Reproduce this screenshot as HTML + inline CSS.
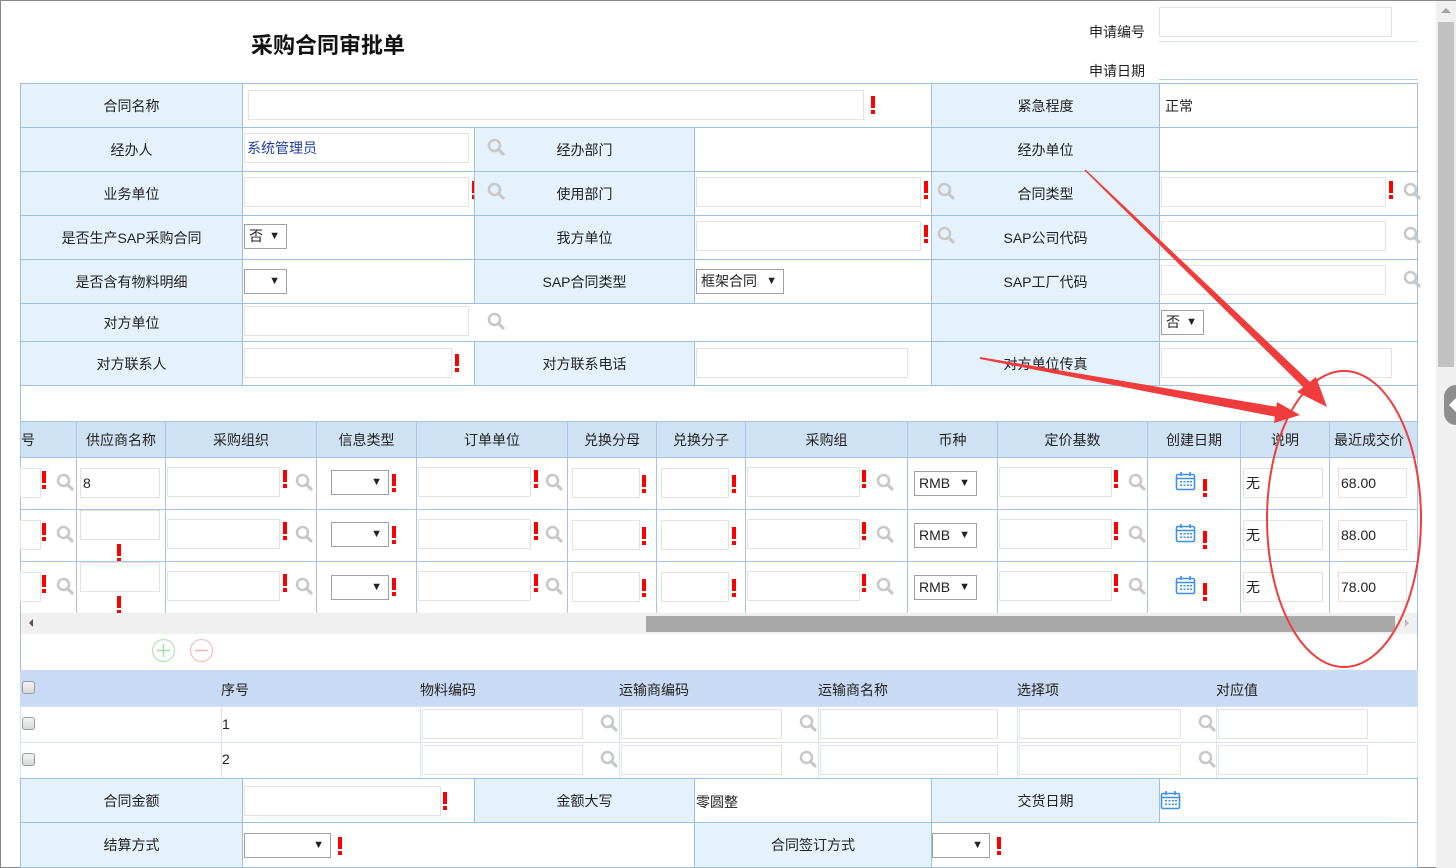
<!DOCTYPE html>
<html><head><meta charset="utf-8"><style>
*{box-sizing:border-box;margin:0;padding:0}
body{width:1456px;height:868px;overflow:hidden;background:#fff;font-family:"Liberation Sans","Noto Sans CJK SC",sans-serif;font-size:14px;color:#222;position:relative}
.a{position:absolute}
.l{position:absolute;background:#e5f1fb;border:1px solid #9cc0e0;display:flex;align-items:center;justify-content:center}
.w{position:absolute;background:#fff;border:1px solid #9cc0e0}
.in{position:absolute;background:#fff;border:1px solid #e4e4de;height:30px;padding-left:2px;line-height:28px}
.ex{position:absolute;width:4px;height:18px}
.ex:before{content:"";position:absolute;left:0;top:0;width:4px;height:12px;background:#f00}
.ex:after{content:"";position:absolute;left:0;top:14px;width:4px;height:4px;background:#f00}
.sel{position:absolute;background:#fff;border:1px solid #a0a0a0;height:25px;line-height:23px;padding-left:4px;font-size:14px}
.sel:after{content:"▼";position:absolute;right:6px;font-size:11px}
.g{position:absolute;border:1px solid #a6c3ea;background:#fff}
.gh{position:absolute;border:1px solid #a6c3ea;background:#cfe2f3;display:flex;align-items:center;justify-content:center}
.cb{position:absolute;width:13px;height:13px;border:1px solid #999;border-radius:3px;background:linear-gradient(#f4f4f4,#d8d8d8)}
.t2{position:absolute;border:1px solid #d4e4f2;background:#fff}
</style></head><body>
<svg width="0" height="0" style="position:absolute"><defs>
<g id="mg"><circle cx="7.5" cy="7.5" r="5.5" fill="none" stroke="#c8c8c8" stroke-width="2.6"/><line x1="11.5" y1="11.5" x2="16" y2="16" stroke="#c8c8c8" stroke-width="3.2" stroke-linecap="round"/></g>
<g id="cal"><rect x="1.5" y="3.5" width="18" height="15" rx="1.5" fill="#fff" stroke="#3d8fe8" stroke-width="1.6"/><line x1="1.5" y1="7.5" x2="19.5" y2="7.5" stroke="#3d8fe8" stroke-width="1.5"/><line x1="6" y1="1" x2="6" y2="5" stroke="#3d8fe8" stroke-width="1.6"/><line x1="15" y1="1" x2="15" y2="5" stroke="#3d8fe8" stroke-width="1.6"/><g fill="#3d8fe8"><rect x="5" y="10" width="2" height="1.5"/><rect x="8.5" y="10" width="2" height="1.5"/><rect x="12" y="10" width="2" height="1.5"/><rect x="15" y="10" width="2" height="1.5"/><rect x="5" y="13.5" width="2" height="1.5"/><rect x="8.5" y="13.5" width="2" height="1.5"/><rect x="12" y="13.5" width="2" height="1.5"/><rect x="15" y="13.5" width="2" height="1.5"/></g></g>
</defs></svg>
<!-- frame -->
<div class="a" style="left:0;top:0;width:1456px;height:1px;background:#888"></div>
<div class="a" style="left:0;top:0;width:1px;height:868px;background:#888"></div>
<div class="a" style="left:0;top:867px;width:1436px;height:1px;background:#888"></div>
<!-- vertical scrollbar -->
<div class="a" style="left:1436px;top:1px;width:20px;height:867px;background:#f0f0f0"></div>
<div class="a" style="left:1438px;top:22px;width:16px;height:345px;background:#c1c1c1"></div>
<div class="a" style="left:1441px;top:8px;width:0;height:0;border-left:5px solid transparent;border-right:5px solid transparent;border-bottom:5px solid #a3a3a3"></div>
<div class="a" style="left:1444px;top:385px;width:24px;height:40px;border-radius:20px;background:#8e8e8e"></div>
<div class="a" style="left:1449px;top:398px;width:0;height:0;border-top:7px solid transparent;border-bottom:7px solid transparent;border-right:7px solid #fff"></div>

<!-- header -->
<div class="a" style="left:251px;top:28px;font-size:22px;font-weight:bold;color:#111">采购合同审批单</div>
<div class="a" style="left:1089px;top:22px">申请编号</div>
<div class="in" style="left:1159px;top:7px;width:233px;height:30px"></div>
<div class="a" style="left:1159px;top:41px;width:259px;height:1px;background:#d0dfee"></div>
<div class="a" style="left:1089px;top:61px">申请日期</div>
<div class="a" style="left:1159px;top:79px;width:259px;height:1px;background:#b8cfe6"></div>

<!-- main table -->
<div class="l" style="left:20px;top:83px;width:223px;height:45px">合同名称</div>
<div class="w" style="left:242px;top:83px;width:690px;height:45px"></div>
<div class="in" style="left:248px;top:90px;width:616px;height:30px"></div>
<div class="ex" style="left:871px;top:96px"></div>
<div class="l" style="left:931px;top:83px;width:229px;height:45px">紧急程度</div>
<div class="w" style="left:1159px;top:83px;width:259px;height:45px"></div>
<div class="a" style="left:1165px;top:96px">正常</div>

<div class="l" style="left:20px;top:127px;width:223px;height:45px">经办人</div>
<div class="w" style="left:242px;top:127px;width:233px;height:45px"></div>
<div class="in" style="left:244px;top:133px;width:225px;height:30px;color:#1f3fa0">系统管理员</div>
<div class="l" style="left:474px;top:127px;width:221px;height:45px">经办部门</div>
<svg class="a" style="left:487px;top:138px" width="18" height="18"><use href="#mg"/></svg>
<div class="w" style="left:694px;top:127px;width:238px;height:45px"></div>
<div class="l" style="left:931px;top:127px;width:229px;height:45px">经办单位</div>
<div class="w" style="left:1159px;top:127px;width:259px;height:45px"></div>

<div class="l" style="left:20px;top:171px;width:223px;height:45px">业务单位</div>
<div class="w" style="left:242px;top:171px;width:233px;height:45px"></div>
<div class="in" style="left:244px;top:177px;width:225px;height:30px"></div>
<div class="ex" style="left:472px;top:181px"></div>
<div class="l" style="left:474px;top:171px;width:221px;height:45px">使用部门</div>
<svg class="a" style="left:487px;top:182px" width="18" height="18"><use href="#mg"/></svg>
<div class="w" style="left:694px;top:171px;width:238px;height:45px"></div>
<div class="in" style="left:696px;top:177px;width:225px;height:30px"></div>
<div class="ex" style="left:924px;top:181px"></div>
<div class="l" style="left:931px;top:171px;width:229px;height:45px">合同类型</div>
<svg class="a" style="left:937px;top:182px" width="18" height="18"><use href="#mg"/></svg>
<div class="w" style="left:1159px;top:171px;width:259px;height:45px"></div>
<div class="in" style="left:1161px;top:177px;width:225px;height:30px"></div>
<div class="ex" style="left:1389px;top:181px"></div>
<svg class="a" style="left:1403px;top:182px" width="18" height="18"><use href="#mg"/></svg>

<div class="l" style="left:20px;top:215px;width:223px;height:45px">是否生产SAP采购合同</div>
<div class="w" style="left:242px;top:215px;width:233px;height:45px"></div>
<div class="sel" style="left:244px;top:224px;width:43px">否</div>
<div class="l" style="left:474px;top:215px;width:221px;height:45px">我方单位</div>
<div class="w" style="left:694px;top:215px;width:238px;height:45px"></div>
<div class="in" style="left:696px;top:221px;width:225px;height:30px"></div>
<div class="ex" style="left:924px;top:225px"></div>
<div class="l" style="left:931px;top:215px;width:229px;height:45px">SAP公司代码</div>
<svg class="a" style="left:937px;top:226px" width="18" height="18"><use href="#mg"/></svg>
<div class="w" style="left:1159px;top:215px;width:259px;height:45px"></div>
<div class="in" style="left:1161px;top:221px;width:225px;height:30px"></div>
<svg class="a" style="left:1403px;top:226px" width="18" height="18"><use href="#mg"/></svg>

<div class="l" style="left:20px;top:259px;width:223px;height:45px">是否含有物料明细</div>
<div class="w" style="left:242px;top:259px;width:233px;height:45px"></div>
<div class="sel" style="left:244px;top:269px;width:43px"></div>
<div class="l" style="left:474px;top:259px;width:221px;height:45px">SAP合同类型</div>
<div class="w" style="left:694px;top:259px;width:238px;height:45px"></div>
<div class="sel" style="left:696px;top:269px;width:88px">框架合同</div>
<div class="l" style="left:931px;top:259px;width:229px;height:45px">SAP工厂代码</div>
<div class="w" style="left:1159px;top:259px;width:259px;height:45px"></div>
<div class="in" style="left:1161px;top:265px;width:225px;height:30px"></div>
<svg class="a" style="left:1403px;top:270px" width="18" height="18"><use href="#mg"/></svg>

<div class="l" style="left:20px;top:303px;width:223px;height:39px">对方单位</div>
<div class="w" style="left:242px;top:303px;width:690px;height:39px"></div>
<div class="in" style="left:244px;top:306px;width:225px;height:30px"></div>
<svg class="a" style="left:487px;top:312px" width="18" height="18"><use href="#mg"/></svg>
<div class="l" style="left:931px;top:303px;width:229px;height:39px"></div>
<div class="w" style="left:1159px;top:303px;width:259px;height:39px"></div>
<div class="sel" style="left:1161px;top:310px;width:43px">否</div>

<div class="l" style="left:20px;top:341px;width:223px;height:45px">对方联系人</div>
<div class="w" style="left:242px;top:341px;width:233px;height:45px"></div>
<div class="in" style="left:244px;top:348px;width:208px;height:30px"></div>
<div class="ex" style="left:455px;top:354px"></div>
<div class="l" style="left:474px;top:341px;width:221px;height:45px">对方联系电话</div>
<div class="w" style="left:694px;top:341px;width:238px;height:45px"></div>
<div class="in" style="left:696px;top:348px;width:212px;height:30px"></div>
<div class="l" style="left:931px;top:341px;width:229px;height:45px">对方单位传真</div>
<div class="w" style="left:1159px;top:341px;width:259px;height:45px"></div>
<div class="in" style="left:1161px;top:348px;width:231px;height:30px"></div>

<div class="w" style="left:20px;top:385px;width:1398px;height:37px"></div>

<!-- grid header -->
<div class="gh" style="left:20px;top:421px;width:57px;height:37px;justify-content:flex-start">号</div>
<div class="gh" style="left:76px;top:421px;width:90px;height:37px">供应商名称</div>
<div class="gh" style="left:165px;top:421px;width:152px;height:37px">采购组织</div>
<div class="gh" style="left:316px;top:421px;width:101px;height:37px">信息类型</div>
<div class="gh" style="left:416px;top:421px;width:152px;height:37px">订单单位</div>
<div class="gh" style="left:567px;top:421px;width:90px;height:37px">兑换分母</div>
<div class="gh" style="left:656px;top:421px;width:90px;height:37px">兑换分子</div>
<div class="gh" style="left:745px;top:421px;width:163px;height:37px">采购组</div>
<div class="gh" style="left:907px;top:421px;width:91px;height:37px">币种</div>
<div class="gh" style="left:997px;top:421px;width:151px;height:37px">定价基数</div>
<div class="gh" style="left:1147px;top:421px;width:94px;height:37px">创建日期</div>
<div class="gh" style="left:1240px;top:421px;width:90px;height:37px">说明</div>
<div class="gh" style="left:1329px;top:421px;width:89px;height:37px;overflow:hidden;white-space:nowrap;justify-content:flex-start;padding-left:4px">最近成交价</div>

<!-- grid row 1 (457) -->
<div class="g" style="left:20px;top:457px;width:57px;height:53px"></div>
<div class="g" style="left:76px;top:457px;width:90px;height:53px"></div>
<div class="g" style="left:165px;top:457px;width:152px;height:53px"></div>
<div class="g" style="left:316px;top:457px;width:101px;height:53px"></div>
<div class="g" style="left:416px;top:457px;width:152px;height:53px"></div>
<div class="g" style="left:567px;top:457px;width:90px;height:53px"></div>
<div class="g" style="left:656px;top:457px;width:90px;height:53px"></div>
<div class="g" style="left:745px;top:457px;width:163px;height:53px"></div>
<div class="g" style="left:907px;top:457px;width:91px;height:53px"></div>
<div class="g" style="left:997px;top:457px;width:151px;height:53px"></div>
<div class="g" style="left:1147px;top:457px;width:94px;height:53px"></div>
<div class="g" style="left:1240px;top:457px;width:90px;height:53px"></div>
<div class="g" style="left:1329px;top:457px;width:89px;height:53px"></div>
<div class="in" style="left:20px;top:468px;width:21px"></div><div class="ex" style="left:42px;top:471px"></div><svg class="a" style="left:56px;top:473px" width="18" height="18"><use href="#mg"/></svg>
<div class="in" style="left:80px;top:468px;width:80px">8</div>
<div class="in" style="left:167px;top:467px;width:113px"></div><div class="ex" style="left:283px;top:470px"></div><svg class="a" style="left:295px;top:473px" width="18" height="18"><use href="#mg"/></svg>
<div class="sel" style="left:331px;top:470px;width:58px"></div><div class="ex" style="left:392px;top:474px"></div>
<div class="in" style="left:418px;top:467px;width:113px"></div><div class="ex" style="left:534px;top:470px"></div><svg class="a" style="left:545px;top:473px" width="18" height="18"><use href="#mg"/></svg>
<div class="in" style="left:572px;top:468px;width:68px"></div><div class="ex" style="left:642px;top:475px"></div>
<div class="in" style="left:661px;top:468px;width:68px"></div><div class="ex" style="left:732px;top:475px"></div>
<div class="in" style="left:747px;top:467px;width:113px"></div><div class="ex" style="left:862px;top:470px"></div><svg class="a" style="left:876px;top:473px" width="18" height="18"><use href="#mg"/></svg>
<div class="sel" style="left:914px;top:471px;width:63px">RMB</div>
<div class="in" style="left:999px;top:467px;width:113px"></div><div class="ex" style="left:1114px;top:470px"></div><svg class="a" style="left:1128px;top:473px" width="18" height="18"><use href="#mg"/></svg>
<svg class="a" style="left:1175px;top:471px" width="22" height="20"><use href="#cal"/></svg><div class="ex" style="left:1203px;top:479px"></div>
<div class="in" style="left:1243px;top:468px;width:80px">无</div>
<div class="in" style="left:1338px;top:468px;width:69px">68.00</div>

<!-- grid row 2 (509) -->
<div class="g" style="left:20px;top:509px;width:57px;height:53px"></div>
<div class="g" style="left:76px;top:509px;width:90px;height:53px"></div>
<div class="g" style="left:165px;top:509px;width:152px;height:53px"></div>
<div class="g" style="left:316px;top:509px;width:101px;height:53px"></div>
<div class="g" style="left:416px;top:509px;width:152px;height:53px"></div>
<div class="g" style="left:567px;top:509px;width:90px;height:53px"></div>
<div class="g" style="left:656px;top:509px;width:90px;height:53px"></div>
<div class="g" style="left:745px;top:509px;width:163px;height:53px"></div>
<div class="g" style="left:907px;top:509px;width:91px;height:53px"></div>
<div class="g" style="left:997px;top:509px;width:151px;height:53px"></div>
<div class="g" style="left:1147px;top:509px;width:94px;height:53px"></div>
<div class="g" style="left:1240px;top:509px;width:90px;height:53px"></div>
<div class="g" style="left:1329px;top:509px;width:89px;height:53px"></div>
<div class="in" style="left:20px;top:520px;width:21px"></div><div class="ex" style="left:42px;top:523px"></div><svg class="a" style="left:56px;top:525px" width="18" height="18"><use href="#mg"/></svg>
<div class="in" style="left:80px;top:510px;width:80px"></div><div class="ex" style="left:117px;top:544px"></div>
<div class="in" style="left:167px;top:519px;width:113px"></div><div class="ex" style="left:283px;top:522px"></div><svg class="a" style="left:295px;top:525px" width="18" height="18"><use href="#mg"/></svg>
<div class="sel" style="left:331px;top:522px;width:58px"></div><div class="ex" style="left:392px;top:526px"></div>
<div class="in" style="left:418px;top:519px;width:113px"></div><div class="ex" style="left:534px;top:522px"></div><svg class="a" style="left:545px;top:525px" width="18" height="18"><use href="#mg"/></svg>
<div class="in" style="left:572px;top:520px;width:68px"></div><div class="ex" style="left:642px;top:527px"></div>
<div class="in" style="left:661px;top:520px;width:68px"></div><div class="ex" style="left:732px;top:527px"></div>
<div class="in" style="left:747px;top:519px;width:113px"></div><div class="ex" style="left:862px;top:522px"></div><svg class="a" style="left:876px;top:525px" width="18" height="18"><use href="#mg"/></svg>
<div class="sel" style="left:914px;top:523px;width:63px">RMB</div>
<div class="in" style="left:999px;top:519px;width:113px"></div><div class="ex" style="left:1114px;top:522px"></div><svg class="a" style="left:1128px;top:525px" width="18" height="18"><use href="#mg"/></svg>
<svg class="a" style="left:1175px;top:523px" width="22" height="20"><use href="#cal"/></svg><div class="ex" style="left:1203px;top:531px"></div>
<div class="in" style="left:1243px;top:520px;width:80px">无</div>
<div class="in" style="left:1338px;top:520px;width:69px">88.00</div>

<!-- grid row 3 (561) -->
<div class="g" style="left:20px;top:561px;width:57px;height:53px"></div>
<div class="g" style="left:76px;top:561px;width:90px;height:53px"></div>
<div class="g" style="left:165px;top:561px;width:152px;height:53px"></div>
<div class="g" style="left:316px;top:561px;width:101px;height:53px"></div>
<div class="g" style="left:416px;top:561px;width:152px;height:53px"></div>
<div class="g" style="left:567px;top:561px;width:90px;height:53px"></div>
<div class="g" style="left:656px;top:561px;width:90px;height:53px"></div>
<div class="g" style="left:745px;top:561px;width:163px;height:53px"></div>
<div class="g" style="left:907px;top:561px;width:91px;height:53px"></div>
<div class="g" style="left:997px;top:561px;width:151px;height:53px"></div>
<div class="g" style="left:1147px;top:561px;width:94px;height:53px"></div>
<div class="g" style="left:1240px;top:561px;width:90px;height:53px"></div>
<div class="g" style="left:1329px;top:561px;width:89px;height:53px"></div>
<div class="in" style="left:20px;top:572px;width:21px"></div><div class="ex" style="left:42px;top:575px"></div><svg class="a" style="left:56px;top:577px" width="18" height="18"><use href="#mg"/></svg>
<div class="in" style="left:80px;top:562px;width:80px"></div><div class="ex" style="left:117px;top:596px"></div>
<div class="in" style="left:167px;top:571px;width:113px"></div><div class="ex" style="left:283px;top:574px"></div><svg class="a" style="left:295px;top:577px" width="18" height="18"><use href="#mg"/></svg>
<div class="sel" style="left:331px;top:575px;width:58px"></div><div class="ex" style="left:392px;top:578px"></div>
<div class="in" style="left:418px;top:571px;width:113px"></div><div class="ex" style="left:534px;top:574px"></div><svg class="a" style="left:545px;top:577px" width="18" height="18"><use href="#mg"/></svg>
<div class="in" style="left:572px;top:572px;width:68px"></div><div class="ex" style="left:642px;top:579px"></div>
<div class="in" style="left:661px;top:572px;width:68px"></div><div class="ex" style="left:732px;top:579px"></div>
<div class="in" style="left:747px;top:571px;width:113px"></div><div class="ex" style="left:862px;top:574px"></div><svg class="a" style="left:876px;top:577px" width="18" height="18"><use href="#mg"/></svg>
<div class="sel" style="left:914px;top:575px;width:63px">RMB</div>
<div class="in" style="left:999px;top:571px;width:113px"></div><div class="ex" style="left:1114px;top:574px"></div><svg class="a" style="left:1128px;top:577px" width="18" height="18"><use href="#mg"/></svg>
<svg class="a" style="left:1175px;top:575px" width="22" height="20"><use href="#cal"/></svg><div class="ex" style="left:1203px;top:583px"></div>
<div class="in" style="left:1243px;top:572px;width:80px">无</div>
<div class="in" style="left:1338px;top:572px;width:69px">78.00</div>

<!-- h scrollbar -->
<div class="a" style="left:20px;top:613px;width:1398px;height:21px;background:#f0f0f0"></div>
<div class="a" style="left:29px;top:619px;width:0;height:0;border-top:4px solid transparent;border-bottom:4px solid transparent;border-right:4px solid #555"></div>
<div class="a" style="left:646px;top:616px;width:749px;height:16px;background:#a8a8a8"></div>
<div class="a" style="left:1405px;top:619px;width:0;height:0;border-top:4px solid transparent;border-bottom:4px solid transparent;border-left:4px solid #bbb"></div>
<div class="a" style="left:20px;top:613px;width:1px;height:255px;background:#9cc0e0"></div>
<div class="a" style="left:1417px;top:613px;width:1px;height:255px;background:#9cc0e0"></div>

<!-- add/remove -->
<svg class="a" style="left:151px;top:638px" width="64" height="26"><circle cx="12.5" cy="12.5" r="11" fill="none" stroke="#b8e4b8" stroke-width="1.3"/><path d="M12.5 6v13M6 12.5h13" stroke="#a8dca8" stroke-width="1.5"/><circle cx="50.5" cy="12.5" r="11" fill="none" stroke="#f5c2c2" stroke-width="1.3"/><path d="M44 12.5h13" stroke="#f2b0b0" stroke-width="1.5"/></svg>

<!-- second grid -->
<div class="a" style="left:20px;top:670px;width:1398px;height:36px;background:#c9daf5"></div>
<div class="cb" style="left:22px;top:681px"></div>
<div class="a" style="left:221px;top:680px">序号</div>
<div class="a" style="left:420px;top:680px">物料编码</div>
<div class="a" style="left:619px;top:680px">运输商编码</div>
<div class="a" style="left:818px;top:680px">运输商名称</div>
<div class="a" style="left:1017px;top:680px">选择项</div>
<div class="a" style="left:1216px;top:680px">对应值</div>

<div class="t2" style="left:20px;top:706px;width:202px;height:37px"></div>
<div class="t2" style="left:221px;top:706px;width:200px;height:37px"></div>
<div class="t2" style="left:420px;top:706px;width:200px;height:37px"></div>
<div class="t2" style="left:619px;top:706px;width:200px;height:37px"></div>
<div class="t2" style="left:818px;top:706px;width:200px;height:37px"></div>
<div class="t2" style="left:1017px;top:706px;width:200px;height:37px"></div>
<div class="t2" style="left:1216px;top:706px;width:202px;height:37px"></div>
<div class="cb" style="left:22px;top:717px"></div>
<div class="a" style="left:222px;top:716px">1</div>
<div class="in" style="left:422px;top:709px;width:161px"></div><svg class="a" style="left:600px;top:714px" width="18" height="18"><use href="#mg"/></svg>
<div class="in" style="left:621px;top:709px;width:161px"></div><svg class="a" style="left:799px;top:714px" width="18" height="18"><use href="#mg"/></svg>
<div class="in" style="left:820px;top:709px;width:178px"></div>
<div class="in" style="left:1019px;top:709px;width:162px"></div><svg class="a" style="left:1198px;top:714px" width="18" height="18"><use href="#mg"/></svg>
<div class="in" style="left:1218px;top:709px;width:150px"></div>

<div class="t2" style="left:20px;top:742px;width:202px;height:37px"></div>
<div class="t2" style="left:221px;top:742px;width:200px;height:37px"></div>
<div class="t2" style="left:420px;top:742px;width:200px;height:37px"></div>
<div class="t2" style="left:619px;top:742px;width:200px;height:37px"></div>
<div class="t2" style="left:818px;top:742px;width:200px;height:37px"></div>
<div class="t2" style="left:1017px;top:742px;width:200px;height:37px"></div>
<div class="t2" style="left:1216px;top:742px;width:202px;height:37px"></div>
<div class="cb" style="left:22px;top:753px"></div>
<div class="a" style="left:222px;top:751px">2</div>
<div class="in" style="left:422px;top:745px;width:161px"></div><svg class="a" style="left:600px;top:750px" width="18" height="18"><use href="#mg"/></svg>
<div class="in" style="left:621px;top:745px;width:161px"></div><svg class="a" style="left:799px;top:750px" width="18" height="18"><use href="#mg"/></svg>
<div class="in" style="left:820px;top:745px;width:178px"></div>
<div class="in" style="left:1019px;top:745px;width:162px"></div><svg class="a" style="left:1198px;top:750px" width="18" height="18"><use href="#mg"/></svg>
<div class="in" style="left:1218px;top:745px;width:150px"></div>

<!-- bottom table -->
<div class="l" style="left:20px;top:778px;width:223px;height:45px">合同金额</div>
<div class="w" style="left:242px;top:778px;width:233px;height:45px"></div>
<div class="in" style="left:244px;top:786px;width:197px;height:30px"></div>
<div class="ex" style="left:443px;top:792px"></div>
<div class="l" style="left:474px;top:778px;width:221px;height:45px">金额大写</div>
<div class="w" style="left:694px;top:778px;width:238px;height:45px"></div>
<div class="a" style="left:696px;top:792px">零圆整</div>
<div class="l" style="left:931px;top:778px;width:229px;height:45px">交货日期</div>
<div class="w" style="left:1159px;top:778px;width:259px;height:45px"></div>
<svg class="a" style="left:1160px;top:790px" width="22" height="20"><use href="#cal"/></svg>

<div class="l" style="left:20px;top:822px;width:223px;height:46px">结算方式</div>
<div class="w" style="left:242px;top:822px;width:453px;height:46px"></div>
<div class="sel" style="left:244px;top:833px;width:87px"></div>
<div class="ex" style="left:338px;top:837px"></div>
<div class="l" style="left:694px;top:822px;width:238px;height:46px">合同签订方式</div>
<div class="w" style="left:931px;top:822px;width:487px;height:46px"></div>
<div class="sel" style="left:932px;top:833px;width:58px"></div>
<div class="ex" style="left:997px;top:837px"></div>

<!-- annotations -->
<svg class="a" style="left:0;top:0" width="1456" height="868">
<g fill="#f03c3c" stroke="none">
<polygon points="1084.5,170.5 1085.5,169.5 1310,382 1304,388"/>
<polygon points="1327,407 1297,392 1316,377"/>
<polygon points="980,357 980,359 1282,418 1284,408"/>
<polygon points="1300,415 1277,402 1274,423"/>
</g>
<ellipse cx="1344" cy="519" rx="77" ry="148" fill="none" stroke="#f03c3c" stroke-width="2"/>
</svg>
</body></html>
